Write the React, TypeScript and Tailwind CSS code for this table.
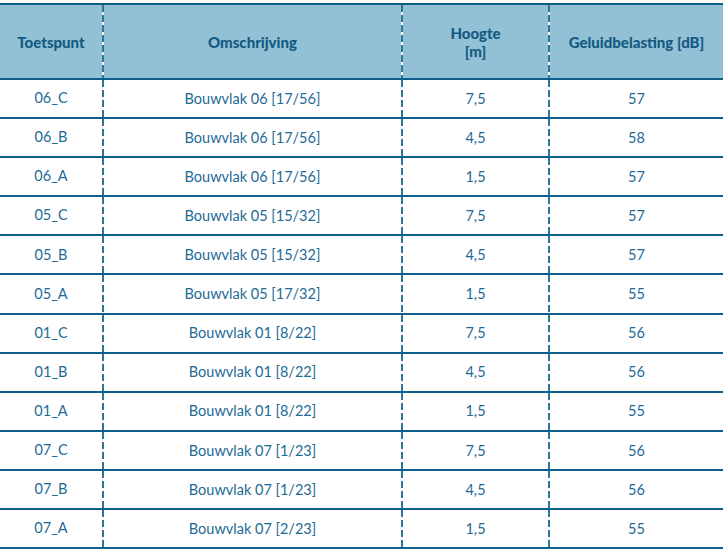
import React from "react";

interface Row {
  punt: string;
  omschrijving: string;
  hoogte: string;
  db: string;
}

const rows: Row[] = [
  { punt: "06_C", omschrijving: "Bouwvlak 06 [17/56]", hoogte: "7,5", db: "57" },
  { punt: "06_B", omschrijving: "Bouwvlak 06 [17/56]", hoogte: "4,5", db: "58" },
  { punt: "06_A", omschrijving: "Bouwvlak 06 [17/56]", hoogte: "1,5", db: "57" },
  { punt: "05_C", omschrijving: "Bouwvlak 05 [15/32]", hoogte: "7,5", db: "57" },
  { punt: "05_B", omschrijving: "Bouwvlak 05 [15/32]", hoogte: "4,5", db: "57" },
  { punt: "05_A", omschrijving: "Bouwvlak 05 [17/32]", hoogte: "1,5", db: "55" },
  { punt: "01_C", omschrijving: "Bouwvlak 01 [8/22]", hoogte: "7,5", db: "56" },
  { punt: "01_B", omschrijving: "Bouwvlak 01 [8/22]", hoogte: "4,5", db: "56" },
  { punt: "01_A", omschrijving: "Bouwvlak 01 [8/22]", hoogte: "1,5", db: "55" },
  { punt: "07_C", omschrijving: "Bouwvlak 07 [1/23]", hoogte: "7,5", db: "56" },
  { punt: "07_B", omschrijving: "Bouwvlak 07 [1/23]", hoogte: "4,5", db: "56" },
  { punt: "07_A", omschrijving: "Bouwvlak 07 [2/23]", hoogte: "1,5", db: "55" },
];

function Divider() {
  return (
    <div className="w-[2px] shrink-0 self-stretch bg-white bg-[linear-gradient(to_bottom,#2f7596_0,#2f7596_7px,#ffffff_7px,#ffffff_10px)] bg-size-[2px_10px] bg-repeat-y" />
  );
}

export default function App() {
  return (
    <div className="w-[728px] h-[551px] bg-white overflow-hidden font-['Lato','Liberation_Sans',sans-serif] text-[14.5px]">
      <div className="h-[3px]" />
      <div className="w-[723px] border-t-2 border-[#0f5f8c]">
        {/* header */}
        <div className="flex h-[75px] bg-[#92c1d6] border-b-2 border-[#0f5f8c] font-black text-[#155a82] text-[15px] leading-[18px]">
          <div className="w-[102px] flex items-center justify-center">Toetspunt</div>
          <Divider />
          <div className="w-[297px] flex items-center justify-center">Omschrijving</div>
          <Divider />
          <div className="w-[145px] flex items-center justify-center text-center">
            Hoogte
            <br />
            [m]
          </div>
          <Divider />
          <div className="flex-1 flex items-center justify-center">Geluidbelasting [dB]</div>
        </div>
        {rows.map((r, i) => (
          <div
            key={i}
            className="flex h-[39.1px] border-b-2 border-[#0f5f8c] text-[#1e6a96]"
          >
            <div className="w-[102px] flex items-center justify-center pb-[1px]">{r.punt}</div>
            <Divider />
            <div className="w-[297px] flex items-center justify-center">{r.omschrijving}</div>
            <Divider />
            <div className="w-[145px] flex items-center justify-center">{r.hoogte}</div>
            <Divider />
            <div className="flex-1 flex items-center justify-center">{r.db}</div>
          </div>
        ))}
      </div>
    </div>
  );
}
